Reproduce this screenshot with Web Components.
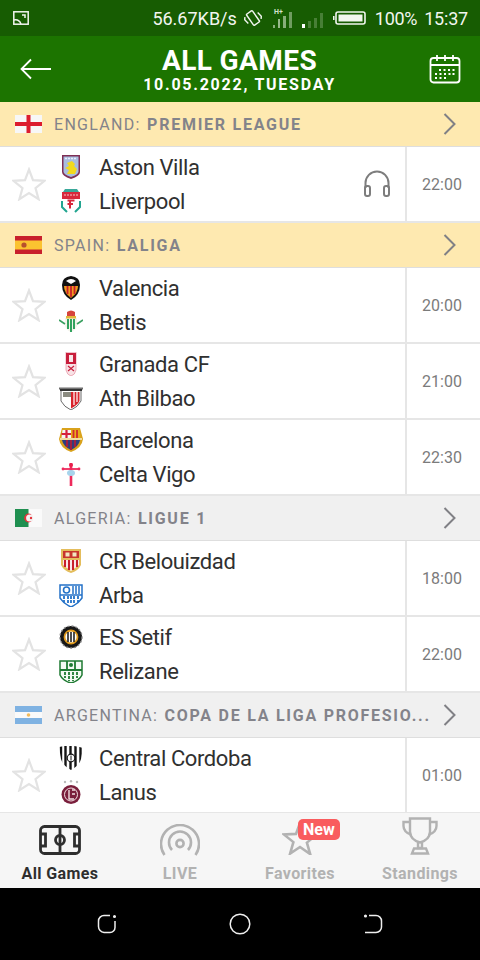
<!DOCTYPE html>
<html>
<head>
<meta charset="utf-8">
<style>
  html, body { margin: 0; padding: 0; background: #fff; }
  body { width: 480px; height: 960px; overflow: hidden; font-family: Roboto, "Liberation Sans", sans-serif; }
</style>
</head>
<body>
<games-app></games-app>
<script>
// flags and crests, drawn small, same size as the ones in the list
const FLAGS = {
  england: `<rect width="27" height="18" fill="#f7f7f7"/><rect x="11.5" width="4" height="18" fill="#dc1c2e"/><rect y="7" width="27" height="4" fill="#dc1c2e"/>`,
  spain: `<rect width="27" height="18" fill="#c8202c"/><rect y="4.5" width="27" height="9" fill="#fbc330"/><circle cx="9" cy="9" r="2.6" fill="#b8502c"/>`,
  algeria: `<rect width="27" height="18" fill="#fafafa"/><rect width="13.5" height="18" fill="#1f8f50"/><circle cx="13.5" cy="9" r="4.4" fill="#e2343c"/><circle cx="14.7" cy="9" r="3.6" fill="#f4f4f4"/><circle cx="16" cy="9" r="1.2" fill="#e2343c"/>`,
  argentina: `<rect width="27" height="18" fill="#7fb2e2"/><rect y="6" width="27" height="6" fill="#fafafa"/><circle cx="13.5" cy="9" r="1.8" fill="#f4bc5c"/>`
};

const CRESTS = {
  villa: `<path d="M3 0h18v17q0 4-9 7q-9-3-9-7z" fill="#7f2f55"/><path d="M4.500 1.500h15v15q0 3-7.500 5.500q-7.500-2.500-7.500-5.500z" fill="#a9bddf"/><path d="M8 8l5-2 3 3-1 2 3 3-2 5h-8l2-4-4-2 4-2z" fill="#f2d91e"/><path d="M6 3.500h12" stroke="#e8eefa" stroke-width="1.500" stroke-dasharray="2 1"/>`,
  liverpool: `<path d="M6 0h12l2 3H4z" fill="#3aa89a"/><rect x="3" y="3" width="18" height="7" fill="#d8283c"/><path d="M5 6h14" stroke="#f4c8cc" stroke-width="1.200" stroke-dasharray="2 1"/><path d="M4 10h16v8q-2 3-8 5q-6-2-8-5z" fill="#fff"/><path d="M8.500 11.500h7M11 11.500v8M8.500 15h5.500" stroke="#d8283c" stroke-width="2"/><path d="M3 12v6l5 5M21 12v6l-5 5" fill="none" stroke="#22a590" stroke-width="2"/>`,
  valencia: `<path d="M12 0q9 1 9 9q0 10-9 15q-9-5-9-15q0-8 9-9z" fill="#111"/><path d="M5 10h14q0 7-7 12q-7-5-7-12z" fill="#f09a1e"/><path d="M8.500 10v8M12 10v11M15.500 10v8" stroke="#c8202c" stroke-width="1.800"/><path d="M7 5q5-4 10 0l-5 3z" fill="#fff"/>`,
  betis: `<path d="M8 2q4-3 8 0v4h-8z" fill="#d6443c"/><path d="M6 8h12v8q-2 5-6 6q-4-1-6-6z" fill="#f4f4ea"/><path d="M9 9v10M12 9v13M15 9v10" stroke="#1d9a50" stroke-width="1.800"/><path d="M0 10l6 4M24 10l-6 4" stroke="#3aa060" stroke-width="1.600"/><rect x="7" y="6" width="10" height="2.500" fill="#e4b83a"/>`,
  granada: `<path d="M7 0h10v18q-1 5-5 6q-4-1-5-6z" fill="#f8e2e6" stroke="#e89aa8" stroke-width=".8"/><path d="M7 1h10v11h-10z" fill="#c81e3c"/><path d="M10 3h4v7h-4z" fill="#f7e7e9"/><path d="M9 14l6 5M15 14l-6 5" stroke="#c81e3c" stroke-width="1.200"/>`,
  bilbao: `<path d="M0 2h24l-2 3v10q-3 6-10 9q-7-3-10-9v-10z" fill="#fff" stroke="#444" stroke-width=".8"/><rect x="1" y="2.500" width="22" height="2.500" fill="#333"/><path d="M12 6h8.500v9q-2 4-8.500 7.500z" fill="#d8242c"/><path d="M15 6v13M18 6v10" stroke="#fff" stroke-width="1.200"/><path d="M4 6h8v5h-8z" fill="#8a8a80"/><path d="M4 11h8v11q-5-2-8-7z" fill="#fff"/>`,
  barcelona: `<path d="M3 0h18l3 11q-1 9-12 13q-11-4-12-13z" fill="#d9a21c"/><path d="M3.500 2h8.500v8h-9.500z" fill="#f4f4f4"/><path d="M7.500 2v8M2.500 6h9.500" stroke="#d6203c" stroke-width="2.200"/><path d="M12 2h8.500l1 8h-9.500z" fill="#e8b018"/><path d="M14.500 2v8M18 2v8" stroke="#d02a30" stroke-width="1.800"/><path d="M3 12h18q-1 6-9 10q-8-4-9-10z" fill="#2a3f80"/><path d="M8 12v7M12 12v10M16 12v7" stroke="#a02040" stroke-width="2.200"/><rect x="1" y="10" width="22" height="2" fill="#f0dca0"/>`,
  celta: `<path d="M12 1v23" stroke="#ee2a5c" stroke-width="2.600"/><path d="M4 7h16" stroke="#ee2a5c" stroke-width="1.800"/><circle cx="12" cy="3" r="2" fill="#e8204c"/><ellipse cx="12" cy="11" rx="4" ry="3" fill="#a8d4ec"/><circle cx="4" cy="7" r="1.400" fill="#ee2a5c"/><circle cx="20" cy="7" r="1.400" fill="#ee2a5c"/>`,
  belouizdad: `<path d="M2 0h20v16q-3 6-10 8q-7-2-10-8z" fill="#e4bd5c"/><path d="M4 2h16v7h-16z" fill="#c8342c"/><path d="M6.500 3.500h4v4h-4zM13.500 3.500h4v4h-4z" fill="#f2e6c0"/><path d="M4 11h16v5l-8 6-8-6z" fill="#fff"/><path d="M6 11v7M10 11v10M14 11v10M18 11v7" stroke="#c8202c" stroke-width="2.200"/>`,
  arba: `<path d="M1 2h22v13q-4 6-11 9q-7-3-11-9z" fill="#fff" stroke="#2472c8" stroke-width="1.500"/><circle cx="7.500" cy="7" r="3" fill="none" stroke="#2472c8" stroke-width="1.600"/><path d="M14 3v8M17 3v8M20 3v8M1 12h22" stroke="#2472c8" stroke-width="1.500"/><path d="M5 13v6M9 13v8M12 13v8M15 13v8M19 13v6" stroke="#2472c8" stroke-width="1.800" stroke-dasharray="3 1"/>`,
  setif: `<circle cx="12" cy="12" r="11" fill="#181818"/><circle cx="12" cy="12" r="11" fill="none" stroke="#888" stroke-width="1.400" stroke-dasharray="2 2"/><circle cx="12" cy="12" r="6.500" fill="#fff" stroke="#e09a1c" stroke-width="1.800"/><path d="M9 7v10M12 7v10M15 7v10" stroke="#222" stroke-width="1.600"/>`,
  relizane: `<path d="M1 2h22v14q-3 6-11 8q-8-2-11-8z" fill="#f4faf4" stroke="#1e7a32" stroke-width="1.500"/><path d="M8 2v9M16 2v9M1 11h22" stroke="#1e7a32" stroke-width="1.800"/><circle cx="12" cy="6" r="2" fill="#1e7a32"/><path d="M6 13v6M10 13v9M14 13v9M18 13v6" stroke="#1e7a32" stroke-width="1.800" stroke-dasharray="3 1"/>`,
  cordoba: `<clipPath id="cc"><path d="M0 1q12-3 24 1l-2 11q-2 7-10 11q-8-4-10-11z"/></clipPath><g clip-path="url(#cc)"><rect width="24" height="24" fill="#fff"/><path d="M2 0v24M6.500 0v24M11.500 0v24M16.500 0v24M21.500 0v24" stroke="#141414" stroke-width="2.400"/></g><circle cx="12" cy="12" r="3.800" fill="#fff" stroke="#141414" stroke-width="1.200"/><path d="M12 9.500v5" stroke="#141414"/>`,
  lanus: `<circle cx="6" cy="2" r="1.200" fill="#bbb"/><circle cx="12" cy="1.200" r="1.200" fill="#bbb"/><circle cx="18" cy="2" r="1.200" fill="#bbb"/><circle cx="12" cy="14.500" r="9.500" fill="#7a1f3c"/><circle cx="12" cy="14.500" r="6.500" fill="none" stroke="#f2dfe2" stroke-width="1"/><path d="M10 10v9h5M13 10h3M13 14h3" stroke="#f2dfe2" stroke-width="1.400" fill="none"/>`
};

class StatusBar extends HTMLElement {
  connectedCallback() {
    this.attachShadow({ mode: "open" }).innerHTML = `
      <style>
        :host { display: flex; align-items: center; height: 36px; background: #175c02; color: #f2f6f0; font-size: 18px; padding: 0 12px 0 13px; box-sizing: border-box; }
        .grow { flex: 1; }
        .speed { margin-right: 7px; }
        svg { display: block; flex: none; }
        .pct { margin-left: 8px; letter-spacing: -.3px; }
        .clock { margin-left: 7px; letter-spacing: -.2px; }
      </style>
      <svg width="16" height="16" viewBox="0 0 16 16" fill="none" stroke="#f2f6f0" stroke-width="1.500"><rect x=".8" y="1.800" width="14.400" height="12.400"/><path d="M1 10q5-1 7 4M9 5h3v3"/></svg>
      <span class="grow"></span>
      <span class="speed">56.67KB/s</span>
      <svg width="18" height="18" viewBox="0 0 20 20" fill="none" stroke="#f2f6f0" stroke-width="1.600"><rect x="6" y="2.500" width="8" height="15" rx="1" transform="rotate(-35 10 10)"/><path d="M1 9l-.2 3 4 4M19 11l.2-3-4-4"/></svg>
      <svg width="56" height="22" viewBox="0 0 56 22" style="margin-left:11px" fill="#b9d2ae">
        <text x="1" y="7" font-size="7" font-weight="700" fill="#d4e2cc">H+</text>
        <rect x="0" y="18" width="2" height="3" opacity=".7"/><rect x="5" y="12" width="2" height="9" opacity=".8"/><rect x="10" y="9" width="3" height="12" opacity=".7"/><rect x="16" y="5" width="3" height="16" opacity=".55"/>
        <rect x="29" y="17" width="3" height="4" fill="#fff"/><rect x="35" y="14" width="3" height="7" opacity=".3"/><rect x="41" y="11" width="3" height="10" opacity=".3"/><rect x="47" y="6" width="3" height="15" opacity=".3"/>
      </svg>
      <svg width="35" height="14" viewBox="0 0 33 14" style="margin-left:3px"><rect x="0" y="5" width="1.500" height="4" fill="#f2f6f0"/><rect x="3" y="1" width="29" height="12" rx="2" fill="none" stroke="#f2f6f0" stroke-width="1.600"/><rect x="5.500" y="3.500" width="24" height="7" fill="#f2f6f0"/></svg>
      <span class="pct">100%</span><span class="clock">15:37</span>`;
  }
}

class AppHeader extends HTMLElement {
  connectedCallback() {
    this.attachShadow({ mode: "open" }).innerHTML = `
      <style>
        :host { display: grid; grid-template-columns: 84px 1fr 84px; align-items: center; height: 66px; background: #1c7400; color: #fff; }
        .back { padding-left: 20px; }
        .title { text-align: center; font-weight: 700; margin-right: 1px; }
        .main { font-size: 28px; line-height: 30px; letter-spacing: .4px; margin-top: 2px; }
        .sub { font-size: 16px; line-height: 20px; letter-spacing: 1.750px; margin-top: -1px; }
        .cal { justify-self: end; padding-right: 19px; }
        svg { display: block; }
      </style>
      <div class="back"><svg width="32" height="22" viewBox="0 0 32 22" fill="none" stroke="#fff" stroke-width="1.800"><path d="M31 11H2M11 1.500L1.500 11l9.500 9.500"/></svg></div>
      <div class="title"><div class="main"><slot name="title"></slot></div><div class="sub"><slot name="sub"></slot></div></div>
      <div class="cal"><svg width="32" height="30" viewBox="0 0 32 30" fill="none" stroke="#fff" stroke-width="1.800"><rect x="1.500" y="4" width="29" height="24.500" rx="3"/><path d="M1.500 11h29M8 1v6M16 1v6M24 1v6"/><path d="M10 16h2M14.500 16h2M19 16h2M23.500 16h2M6 20h2M10.500 20h2M15 20h2M19.500 20h2M23.500 20h2M6 24h2M10.500 24h2M15 24h2" stroke-width="1.800"/></svg></div>`;
  }
}

class LeagueRow extends HTMLElement {
  connectedCallback() {
    const bg = this.hasAttribute("top") ? "#fee9b0" : "#f0f0f0";
    this.attachShadow({ mode: "open" }).innerHTML = `
      <style>
        :host { display: flex; align-items: center; height: 45px; box-sizing: border-box; border-bottom: 1px solid #dedede; background: ${bg}; color: #83838a; padding: 0 24px 0 15px; }
        .flag { display: block; flex: none; margin-right: 12px; }
        .text { flex: 1; min-width: 0; white-space: nowrap; font-size: 16px; letter-spacing: 1.300px; }
        b { font-weight: 700; font-size: 16px; letter-spacing: 1.750px; margin-left: 1px; }
        .chev { display: block; flex: none; margin-left: 16px; }
      </style>
      <svg class="flag" width="27" height="18" viewBox="0 0 27 18">${FLAGS[this.getAttribute("flag")]}</svg>
      <div class="text">${this.getAttribute("country")}: <b>${this.getAttribute("league")}</b></div>
      <svg class="chev" width="13" height="22" viewBox="0 0 13 22" fill="none" stroke="#808085" stroke-width="2"><path d="M1.500 1l10 10-10 10"/></svg>`;
  }
}

class TeamLine extends HTMLElement {
  connectedCallback() {
    this.attachShadow({ mode: "open" }).innerHTML = `
      <style>
        :host { display: flex; align-items: center; height: 34px; color: #303030; font-size: 22px; letter-spacing: -.4px; }
        svg { display: block; flex: none; margin-right: 16px; }
      </style>
      <svg width="24" height="24" viewBox="0 0 24 24">${CRESTS[this.getAttribute("crest")]}</svg>
      <slot></slot>`;
  }
}

class MatchRow extends HTMLElement {
  connectedCallback() {
    const audio = this.hasAttribute("audio") ? `<svg class="audio" width="28" height="28" viewBox="0 0 28 28" fill="none" stroke="#7d7d7d" stroke-width="2"><path d="M2.500 18v-5a11.500 11.500 0 0 1 23 0v5"/><rect x="2" y="16" width="5" height="10" rx="2"/><rect x="21" y="16" width="5" height="10" rx="2"/></svg>` : "";
    this.attachShadow({ mode: "open" }).innerHTML = `
      <style>
        :host { display: flex; height: 76px; box-sizing: border-box; border-bottom: 2px solid #e6e6e6; background: #fff; }
        .star { display: block; flex: none; align-self: center; margin: 0 13px 0 12px; }
        .teams { flex: 1; display: flex; flex-direction: column; justify-content: center; }
        .audio { display: block; flex: none; align-self: center; margin-right: 14px; }
        .time { flex: none; box-sizing: border-box; width: 75px; border-left: 2px solid #e6e6e6; padding-right: 3px; display: flex; align-items: center; justify-content: center; color: #7b7b7b; font-size: 16px; }
      </style>
      <svg class="star" width="34" height="34" viewBox="0 0 34 34" fill="none" stroke="#e3e3e3" stroke-width="2.200" stroke-linejoin="miter"><path d="M17 2.500l4 10.700 11.500.6-9 7.300 3.100 11.100L17 26l-9.600 6.200 3.100-11.100-9-7.300 11.500-.6z"/></svg>
      <div class="teams"><slot></slot></div>
      ${audio}
      <div class="time">${this.getAttribute("time")}</div>`;
  }
}

class TabItem extends HTMLElement {
  connectedCallback() {
    this.attachShadow({ mode: "open" }).innerHTML = `
      <style>
        :host { display: flex; flex-direction: column; align-items: center; flex: 1; position: relative; color: #b2b2b2; font-size: 16px; font-weight: 700; }
        :host([active]) { color: #2e2e2e; }
        .icon { height: 42px; display: flex; align-items: flex-end; justify-content: center; }
        .label { line-height: 20px; margin-top: 9px; letter-spacing: .4px; }
        ::slotted(svg) { display: block; }
      </style>
      <div class="icon"><slot name="icon"></slot></div>
      <div class="label"><slot></slot></div>
      <slot name="badge"></slot>`;
  }
}

class NewBadge extends HTMLElement {
  connectedCallback() {
    this.attachShadow({ mode: "open" }).innerHTML = `
      <style>
        :host { position: absolute; left: 58px; top: 6px; display: block; background: #f95c5e; color: #fff; font-size: 16px; font-weight: 700; line-height: 21px; padding: 0 5px; border-radius: 5px; }
      </style><slot></slot>`;
  }
}

class TabBar extends HTMLElement {
  connectedCallback() {
    this.attachShadow({ mode: "open" }).innerHTML = `
      <style>:host { display: flex; height: 75px; background: #f6f6f6; }</style>
      <tab-item active>
        <svg slot="icon" width="42" height="30" viewBox="0 0 42 30" fill="none" stroke="#2e2e2e" stroke-width="2.800"><rect x="1.500" y="1.500" width="39" height="27" rx="4"/><path d="M21 1.500v27"/><circle cx="21" cy="15" r="4.500"/><path d="M1.500 9h5v12h-5M40.500 9h-5v12h5"/></svg>
        All Games
      </tab-item>
      <tab-item>
        <svg slot="icon" width="40" height="32" viewBox="0 0 40 32" fill="none" stroke="#b2b2b2" stroke-width="2.600" style="margin-bottom:-1px"><path d="M4.500 31a19 19 0 1 1 31 0"/><path d="M12 26a11 11 0 1 1 16 0"/><circle cx="20" cy="19.500" r="3.600"/></svg>
        LIVE
      </tab-item>
      <tab-item>
        <svg slot="icon" width="36" height="34" viewBox="0 0 36 34" fill="none" stroke="#b2b2b2" stroke-width="2.600"><path d="M18 2l4.300 11.400 12.200.5-9.600 7.700 3.300 11.500L18 26l-9.900 6.600 3.300-11.500-9.600-7.700 12.200-.5z"/></svg>
        Favorites
        <new-badge slot="badge">New</new-badge>
      </tab-item>
      <tab-item>
        <svg slot="icon" width="36" height="38" viewBox="0 0 36 38" fill="none" stroke="#b2b2b2" stroke-width="2.400"><path d="M8 1.500h20v13q0 8-10 11q-10-3-10-11z"/><path d="M8 5H1.500v4q0 6 8 9M28 5h6.500v4q0 6-8 9"/><path d="M16 25v6h4v-6"/><path d="M10 36.500l2-5h12l2 5z"/></svg>
        Standings
      </tab-item>`;
  }
}

class NavBar extends HTMLElement {
  connectedCallback() {
    this.attachShadow({ mode: "open" }).innerHTML = `
      <style>
        :host { display: flex; justify-content: center; align-items: center; gap: 112px; height: 72px; background: #000; }
        svg { display: block; }
      </style>
      <svg width="20" height="20" viewBox="0 0 20 20" fill="none" stroke="#eee" stroke-width="1.500"><path d="M13 1.500H7a5.500 5.500 0 0 0-5.500 5.500v5.500A6 6 0 0 0 7 18.500h6a5 5 0 0 0 5-5V7"/><circle cx="17.500" cy="2.500" r=".8" fill="#eee"/></svg>
      <svg width="22" height="22" viewBox="0 0 22 22" fill="none" stroke="#eee" stroke-width="1.500"><circle cx="11" cy="11" r="9.800"/></svg>
      <svg width="20" height="20" viewBox="0 0 20 20" fill="none" stroke="#eee" stroke-width="1.500"><path d="M6 1.500h7a5.500 5.500 0 0 1 5.500 5.500v6a5.500 5.500 0 0 1-5.500 5.500H2"/><circle cx="2.500" cy="2" r=".8" fill="#eee"/></svg>`;
  }
}

class GamesApp extends HTMLElement {
  connectedCallback() {
    const rows = [
      { league: ["england", "ENGLAND", "PREMIER LEAGUE", true] },
      { a: ["villa", "Aston Villa"], b: ["liverpool", "Liverpool"], time: "22:00", audio: true },
      { league: ["spain", "SPAIN", "LALIGA", true] },
      { a: ["valencia", "Valencia"], b: ["betis", "Betis"], time: "20:00" },
      { a: ["granada", "Granada CF"], b: ["bilbao", "Ath Bilbao"], time: "21:00" },
      { a: ["barcelona", "Barcelona"], b: ["celta", "Celta Vigo"], time: "22:30" },
      { league: ["algeria", "ALGERIA", "LIGUE 1"] },
      { a: ["belouizdad", "CR Belouizdad"], b: ["arba", "Arba"], time: "18:00" },
      { a: ["setif", "ES Setif"], b: ["relizane", "Relizane"], time: "22:00" },
      { league: ["argentina", "ARGENTINA", "COPA DE LA LIGA PROFESIO..."] },
      { a: ["cordoba", "Central Cordoba"], b: ["lanus", "Lanus"], time: "01:00" }
    ];
    const list = rows.map(r => r.league
      ? `<league-row flag="${r.league[0]}" country="${r.league[1]}" league="${r.league[2]}" ${r.league[3] ? "top" : ""}></league-row>`
      : `<match-row time="${r.time}" ${r.audio ? "audio" : ""}>
           <team-line crest="${r.a[0]}">${r.a[1]}</team-line>
           <team-line crest="${r.b[0]}">${r.b[1]}</team-line>
         </match-row>`).join("");
    this.attachShadow({ mode: "open" }).innerHTML = `
      <style>
        :host { display: flex; flex-direction: column; width: 480px; height: 960px; }
        .list { flex: 1; min-height: 0; overflow: hidden; background: #fff; }
      </style>
      <status-bar></status-bar>
      <app-header><span slot="title">ALL GAMES</span><span slot="sub">10.05.2022, TUESDAY</span></app-header>
      <div class="list">${list}</div>
      <tab-bar></tab-bar>
      <nav-bar></nav-bar>`;
  }
}

customElements.define("status-bar", StatusBar);
customElements.define("app-header", AppHeader);
customElements.define("league-row", LeagueRow);
customElements.define("team-line", TeamLine);
customElements.define("match-row", MatchRow);
customElements.define("tab-item", TabItem);
customElements.define("new-badge", NewBadge);
customElements.define("tab-bar", TabBar);
customElements.define("nav-bar", NavBar);
customElements.define("games-app", GamesApp);
</script>
</body>
</html>
